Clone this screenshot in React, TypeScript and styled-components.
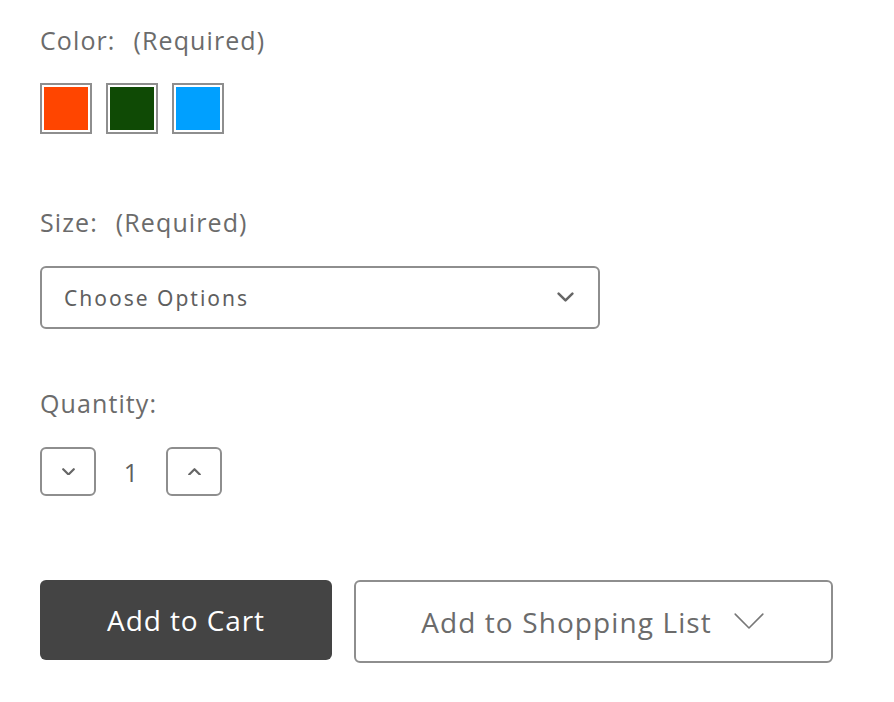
import React, { useState } from 'react';
import styled, { createGlobalStyle } from 'styled-components';

const GlobalStyle = createGlobalStyle`
  body {
    margin: 0;
    background: #ffffff;
    font-family: "Open Sans", "Liberation Sans", sans-serif;
  }
`;

const Form = styled.div`
  display: flex;
  flex-direction: column;
  padding: 28px 0 0 40px;
`;

const Field = styled.div<{ $gap: number; $after: number }>`
  display: flex;
  flex-direction: column;
  gap: ${(p) => p.$gap}px;
  margin-bottom: ${(p) => p.$after}px;
`;

const Label = styled.div`
  height: 28px;
  line-height: 24px;
  font-size: 25px;
  color: #6b6b6b;
  letter-spacing: 1.1px;
  white-space: nowrap;
`;

const Required = styled.small`
  font-size: 25px;
  margin-left: 18px;
`;

const Swatches = styled.div`
  display: flex;
  gap: 14px;
`;

const Swatch = styled.button<{ $color: string }>`
  width: 52px;
  height: 51px;
  padding: 2px;
  border: 2px solid #8e8e8e;
  background: #ffffff;
  cursor: pointer;
  box-sizing: border-box;

  &::after {
    content: '';
    display: block;
    width: 100%;
    height: 100%;
    background: ${(p) => p.$color};
  }
`;

const Select = styled.div`
  width: 560px;
  height: 63px;
  box-sizing: border-box;
  border: 2px solid #8e8e8e;
  border-radius: 6px;
  display: flex;
  align-items: center;
  justify-content: space-between;
  padding: 0 24px 0 22px;
  font-family: "Noto Sans", "Open Sans", sans-serif;
  font-size: 21px;
  letter-spacing: 2px;
  color: #5f5f5f;
`;

const Stepper = styled.div`
  display: flex;
  align-items: center;
`;

const StepButton = styled.button`
  width: 56px;
  height: 49px;
  box-sizing: border-box;
  border: 2px solid #8e8e8e;
  border-radius: 6px;
  background: #ffffff;
  display: flex;
  align-items: center;
  justify-content: center;
  padding: 0;
  cursor: pointer;
`;

const Count = styled.div`
  width: 70px;
  text-align: center;
  font-size: 25px;
  color: #5f5f5f;
`;

const Actions = styled.div`
  display: flex;
  align-items: flex-start;
  gap: 22px;
`;

const CartButton = styled.button`
  width: 292px;
  height: 80px;
  border: none;
  border-radius: 6px;
  background: #444444;
  color: #ffffff;
  font-family: "Open Sans", sans-serif;
  font-size: 28px;
  letter-spacing: 0.9px;
  cursor: pointer;
`;

const ListButton = styled.button`
  width: 479px;
  height: 83px;
  box-sizing: border-box;
  border: 2px solid #8e8e8e;
  border-radius: 6px;
  background: #ffffff;
  color: #6b6b6b;
  font-family: "Open Sans", sans-serif;
  font-size: 28px;
  letter-spacing: 1.1px;
  display: flex;
  align-items: center;
  justify-content: center;
  gap: 20px;
  cursor: pointer;
`;

const Chevron = ({ up = false, size = 16, stroke = 2.5, color = '#666' }: { up?: boolean; size?: number; stroke?: number; color?: string }) => (
  <svg width={size} height={size * 0.6} viewBox="0 0 16 9.6" fill="none">
    <polyline
      points={up ? '1.5,8 8,1.5 14.5,8' : '1.5,1.5 8,8 14.5,1.5'}
      stroke={color}
      strokeWidth={stroke}
      strokeLinecap="round"
      strokeLinejoin="round"
      vectorEffect="non-scaling-stroke"
    />
  </svg>
);

const colors = ['#ff4500', '#0f4a05', '#00a0ff'];

export default function App() {
  const [qty, setQty] = useState(1);

  return (
    <>
      <GlobalStyle />
      <Form>
        <Field $gap={27} $after={76}>
          <Label>
            Color:<Required>(Required)</Required>
          </Label>
          <Swatches>
            {colors.map((c) => (
              <Swatch key={c} $color={c} aria-label={c} />
            ))}
          </Swatches>
        </Field>

        <Field $gap={28} $after={62}>
          <Label>
            Size:<Required>(Required)</Required>
          </Label>
          <Select>
            Choose Options
            <Chevron size={17} stroke={2.5} color="#666" />
          </Select>
        </Field>

        <Field $gap={28} $after={84}>
          <Label>Quantity:</Label>
          <Stepper>
            <StepButton onClick={() => setQty(Math.max(1, qty - 1))}>
              <Chevron size={13} stroke={2.2} color="#666" />
            </StepButton>
            <Count>{qty}</Count>
            <StepButton onClick={() => setQty(qty + 1)}>
              <Chevron up size={13} stroke={2.2} color="#666" />
            </StepButton>
          </Stepper>
        </Field>

        <Actions>
          <CartButton>Add to Cart</CartButton>
          <ListButton>
            Add to Shopping List
            <Chevron size={34} stroke={1.6} color="#777" />
          </ListButton>
        </Actions>
      </Form>
    </>
  );
}
